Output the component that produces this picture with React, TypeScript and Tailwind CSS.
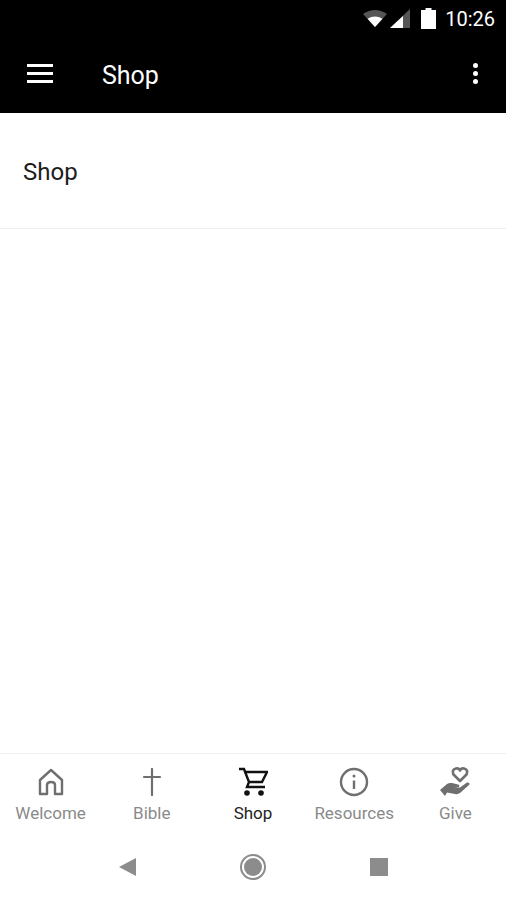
import React from 'react';

const font = "font-['Roboto','Liberation_Sans',sans-serif]";

function StatusBar() {
  return (
    <div className="flex h-[36px] items-center justify-end bg-black pr-[11px] pt-[1px] text-white">
      <svg width="26" height="18" viewBox="0 0 26 18" className="mr-[2px] mb-[1px]">
        <path d="M1 5 Q13 -3 25 5 L13 18 Z" fill="#555" />
        <path d="M5.5 9.8 Q13 5 20.5 9.8 L13 18 Z" fill="#fff" />
      </svg>
      <svg width="21" height="20" viewBox="0 0 21 20" className="mr-[10px]">
        <path d="M0 19 L20 0 L20 19 Z" fill="#555" />
        <path d="M0 19 L13 7 L13 19 Z" fill="#fff" />
      </svg>
      <svg width="15" height="21" viewBox="0 0 15 21" className="mr-[9px]">
        <path d="M4.5 0 H10.5 V2 H15 V21 H0 V2 H4.5 Z" fill="#fff" />
      </svg>
      <span className="text-[20px] leading-none">10:26</span>
    </div>
  );
}

function AppBar() {
  return (
    <div className="flex h-[77px] items-center bg-black pb-[2px] text-white">
      <div className="ml-[27px] flex w-[26px] flex-col gap-[5px]">
        <div className="h-[3px] bg-white" />
        <div className="h-[3px] bg-white" />
        <div className="h-[3px] bg-white" />
      </div>
      <span className="ml-[49px] pt-[3px] text-[25px] leading-none">Shop</span>
      <div className="ml-auto mr-[28px] flex flex-col gap-[3px]">
        <div className="size-[5px] rounded-full bg-white" />
        <div className="size-[5px] rounded-full bg-white" />
        <div className="size-[5px] rounded-full bg-white" />
      </div>
    </div>
  );
}

const gray = '#6f6f6f';

const tabs = [
  {
    label: 'Welcome',
    icon: (
      <svg width="28" height="28" viewBox="0 0 28 28" fill="none" stroke={gray} strokeWidth="2.4" strokeLinejoin="round">
        <path d="M3 26 V12 L14 2 L25 12 V26 H18 V17 Q18 14 14 14 Q10 14 10 17 V26 Z" />
      </svg>
    ),
  },
  {
    label: 'Bible',
    icon: (
      <svg width="28" height="28" viewBox="0 0 28 28" fill="none" stroke={gray} strokeWidth="2.2" strokeLinecap="round">
        <path d="M14 1 V27 M6 9 H22" />
      </svg>
    ),
  },
  {
    label: 'Shop',
    active: true,
    icon: (
      <svg width="30" height="30" viewBox="-1 0 30 30" fill="none" stroke="#111" strokeWidth="2.4">
        <path d="M0 2 H5 L10 15 L8 20 H26" />
        <path d="M5.5 5 H28 L23 15 H10" />
        <circle cx="8" cy="26" r="2.8" fill="#111" stroke="none" />
        <circle cx="22" cy="26" r="2.8" fill="#111" stroke="none" />
      </svg>
    ),
  },
  {
    label: 'Resources',
    icon: (
      <svg width="30" height="30" viewBox="0 0 30 30" fill="none" stroke={gray} strokeWidth="2.4">
        <circle cx="15" cy="15" r="13" />
        <path d="M15 13.5 V22" />
        <circle cx="15" cy="9" r="1.5" fill={gray} stroke="none" />
      </svg>
    ),
  },
  {
    label: 'Give',
    icon: (
      <svg width="30" height="30" viewBox="0 0 30 30">
        <path d="M20 14 L13.5 7.5 Q11.5 2.5 16 1.5 Q19 1 20 3.5 Q21 1 24 1.5 Q28.5 2.5 26.5 7.5 Z" fill="none" stroke={gray} strokeWidth="2.6" strokeLinejoin="round" />
        <path d="M0 23 L7 17 Q9 15.5 12 16 L18 17.5 Q20 18 19 20 L14 20.5 L20 20.5 L27 15.5 Q30 15 29.5 17.5 L20 26 Q18 27.5 15 27 L7 25.5 L5 29 Z" fill={gray} />
      </svg>
    ),
  },
];

function BottomTabs() {
  return (
    <div className="grid h-[82px] grid-cols-5 border-t border-[#eeeeee]">
      {tabs.map((tab) => (
        <div key={tab.label} className="flex flex-col items-center pt-[13px]">
          <div className="flex h-[30px] items-center justify-center">{tab.icon}</div>
          <span
            className={`mt-[6px] text-[17px] leading-[20px] ${tab.active ? 'text-[#222222]' : 'text-[#8a8a8a]'}`}
          >
            {tab.label}
          </span>
        </div>
      ))}
    </div>
  );
}

function NavBar() {
  return (
    <div className="flex h-[65px] items-start justify-center gap-[104px] pt-[19px]">
      <svg width="18" height="20" viewBox="0 0 18 20" className="mt-[3px]">
        <path d="M18 1 V19 L1 10 Z" fill="#8c8c8c" />
      </svg>
      <div className="flex size-[26px] items-center justify-center rounded-full border-2 border-[#8c8c8c] bg-white">
        <div className="size-[18px] rounded-full bg-[#8c8c8c]" />
      </div>
      <div className="mt-[4px] size-[18px] bg-[#8c8c8c]" />
    </div>
  );
}

export default function App() {
  return (
    <div className={`flex h-[900px] w-[506px] flex-col bg-white ${font}`}>
      <StatusBar />
      <AppBar />
      <div className="flex h-[116px] items-center border-b border-[#eeeeee] pl-[23px] pt-[2px]">
        <span className="text-[24px] leading-none text-[#1c1c1c]">Shop</span>
      </div>
      <div className="flex-1" />
      <BottomTabs />
      <NavBar />
    </div>
  );
}
